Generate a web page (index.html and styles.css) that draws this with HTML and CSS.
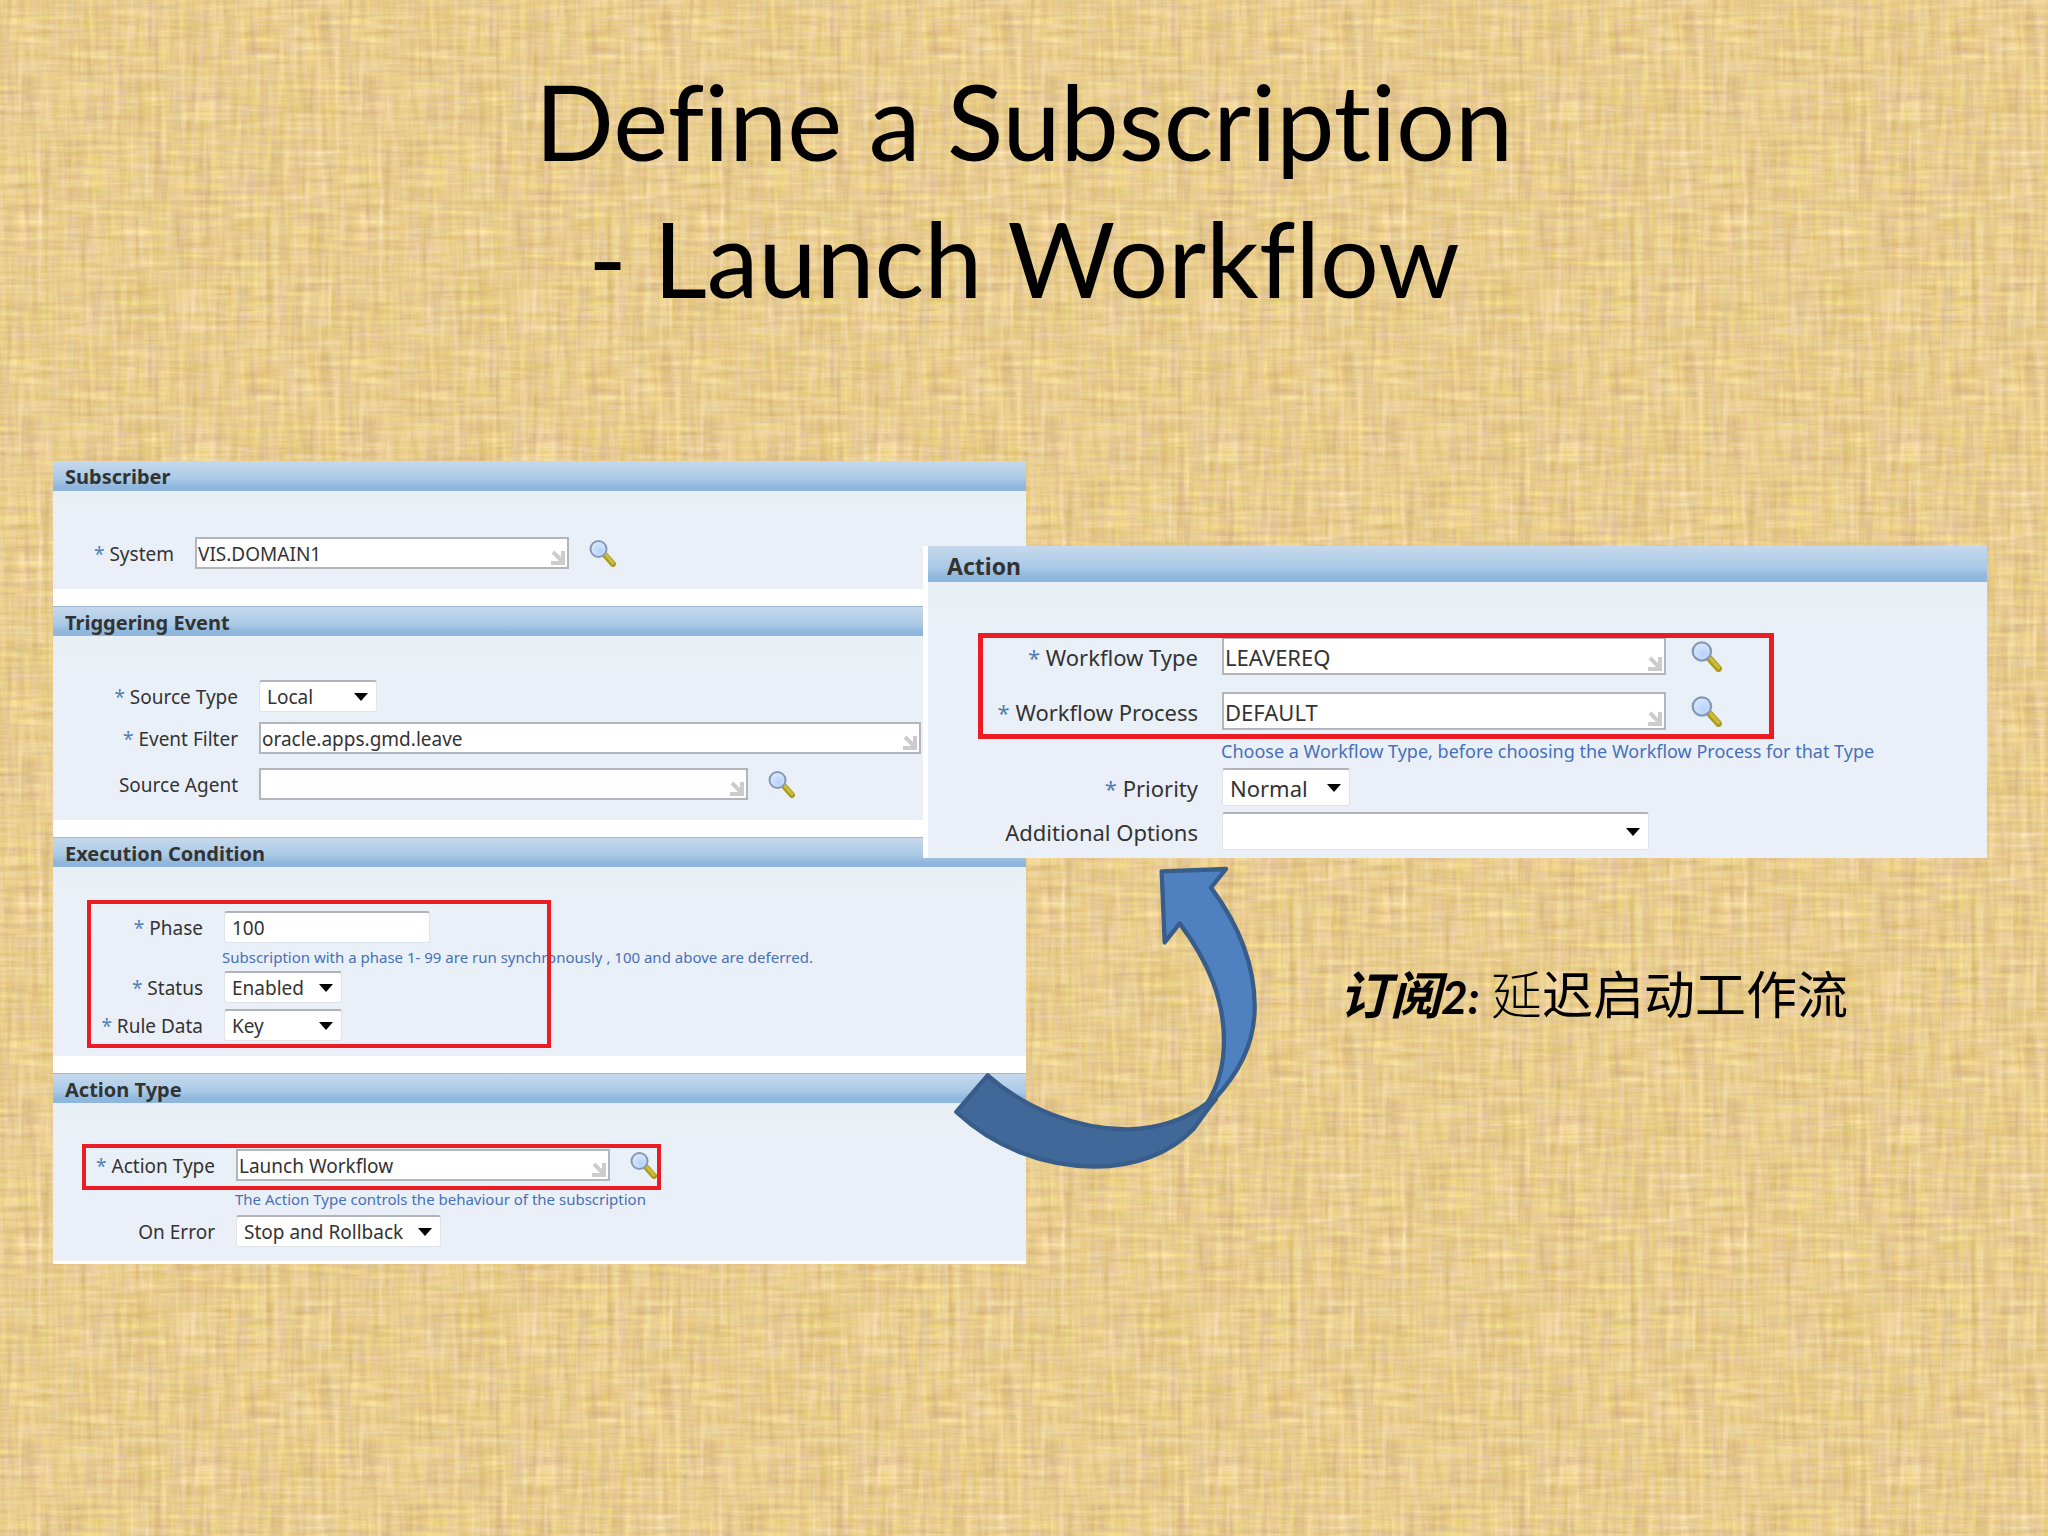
FILE: index.html
```html
<!DOCTYPE html>
<html lang="zh-CN">

<head>
    <meta charset="UTF-8">
    <meta name="viewport" content="width=device-width, initial-scale=1.0">
    <title>Define a Subscription - Launch Workflow</title>
    <link rel="stylesheet" href="styles.css">
</head>

<body>
    <!-- 放大镜图标 -->
    <svg class="defs" width="0" height="0" aria-hidden="true">
        <defs>
            <radialGradient id="glass" cx=".6" cy=".65" r=".7">
                <stop offset="0" stop-color="#b4d2fb" />
                <stop offset="1" stop-color="#dfeafb" />
            </radialGradient>
            <symbol id="search" viewBox="0 0 28 28">
                <path d="M16 16 L24 25" stroke="#a89c1c" stroke-width="6" stroke-linecap="round" />
                <path d="M16 15 L24 24" stroke="#cdbb3a" stroke-width="3" stroke-linecap="round" />
                <circle cx="9.5" cy="10" r="8" fill="url(#glass)" stroke="#8598b8" stroke-width="2" />
            </symbol>
        </defs>
    </svg>

    <main class="slide">
        <h1 class="title">Define a Subscription<br>- Launch Workflow</h1>

        <div class="stage">
            <!-- 左边的订阅表单 -->
            <form class="panel left">
                <section class="block subscriber">
                    <h2>Subscriber</h2>
                    <div class="fields">
                        <div class="row">
                            <label for="system"><i>*</i> System</label>
                            <input type="text" class="grip mid" id="system" value="VIS.DOMAIN1">
                            <button type="button" class="find" aria-label="Search"><svg><use href="#search" /></svg></button>
                        </div>
                    </div>
                </section>

                <section class="block trigger">
                    <h2>Triggering Event</h2>
                    <div class="fields">
                        <div class="row">
                            <label for="stype"><i>*</i> Source Type</label>
                            <select id="stype" class="short"><option>Local</option></select>
                        </div>
                        <div class="row near">
                            <label for="filter"><i>*</i> Event Filter</label>
                            <input type="text" class="grip wide" id="filter" value="oracle.apps.gmd.leave">
                        </div>
                        <div class="row far">
                            <label for="agent">Source Agent</label>
                            <input type="text" class="grip agent" id="agent">
                            <button type="button" class="find" aria-label="Search"><svg><use href="#search" /></svg></button>
                        </div>
                    </div>
                </section>

                <section class="block condition">
                    <h2>Execution Condition</h2>
                    <div class="fields">
                        <div class="row">
                            <label for="phase"><i>*</i> Phase</label>
                            <input type="text" class="plain" id="phase" value="100">
                        </div>
                        <p class="hint">Subscription with a phase 1- 99 are run synchronously , 100 and above are deferred.</p>
                        <div class="row">
                            <label for="status"><i>*</i> Status</label>
                            <select id="status" class="short"><option>Enabled</option></select>
                        </div>
                        <div class="row tight">
                            <label for="rule"><i>*</i> Rule Data</label>
                            <select id="rule" class="short"><option>Key</option></select>
                        </div>
                        <div class="mark"></div>
                    </div>
                </section>

                <section class="block type">
                    <h2>Action Type</h2>
                    <div class="fields">
                        <div class="row">
                            <label for="atype"><i>*</i> Action Type</label>
                            <input type="text" class="grip mid" id="atype" value="Launch Workflow">
                            <button type="button" class="find" aria-label="Search"><svg><use href="#search" /></svg></button>
                        </div>
                        <p class="hint low">The Action Type controls the behaviour of the subscription</p>
                        <div class="row">
                            <label for="onerror">On Error</label>
                            <select id="onerror" class="roll"><option>Stop and Rollback</option></select>
                        </div>
                        <div class="mark"></div>
                    </div>
                </section>
            </form>

            <div class="side">
                <!-- 右边盖在上面的 Action 表单 -->
                <form class="panel right">
                    <section class="block action">
                        <h2>Action</h2>
                        <div class="fields">
                            <div class="row">
                                <label for="wtype"><i>*</i> Workflow Type</label>
                                <input type="text" class="grip flow" id="wtype" value="LEAVEREQ">
                                <button type="button" class="find" aria-label="Search"><svg><use href="#search" /></svg></button>
                            </div>
                            <div class="row far">
                                <label for="wproc"><i>*</i> Workflow Process</label>
                                <input type="text" class="grip flow" id="wproc" value="DEFAULT">
                                <button type="button" class="find" aria-label="Search"><svg><use href="#search" /></svg></button>
                            </div>
                            <p class="hint">Choose a Workflow Type, before choosing the Workflow Process for that Type</p>
                            <div class="row">
                                <label for="prio"><i>*</i> Priority</label>
                                <select id="prio" class="prio"><option>Normal</option></select>
                            </div>
                            <div class="row tight">
                                <label for="opts">Additional Options</label>
                                <select id="opts" class="opts"><option></option></select>
                            </div>
                            <div class="mark"></div>
                        </div>
                    </section>
                </form>

                <p class="caption"><b>订阅<span>2:</span></b> <em>延</em>迟启动工作流</p>

                <!-- 弯箭头 -->
                <svg class="arrow" viewBox="160 45 918 918" aria-hidden="true">
                    <g stroke="#385d8a" stroke-width="13" stroke-linejoin="round">
                        <path fill="#406899" d="M264 676 C375 775 530 838 685 838 C790 836 865 803 922 760 L948 748 C925 775 905 805 882 836 C810 912 700 950 585 950 C430 948 285 893 170 786 Z" />
                        <path fill="#4f81c0" d="M786 64 L979 57 L934 113 C1025 235 1065 350 1065 470 C1065 585 1015 672 940 752 L922 760 C955 710 973 650 973 570 C972 450 930 340 840 220 L795 277 Z" />
                    </g>
                </svg>
            </div>
        </div>
    </main>
</body>

</html>
```

FILE: styles.css
```css
* {
    margin: 0;
    padding: 0;
    box-sizing: border-box;
}

/* 麻布纹理，横竖两层噪点叠在一起 */
body {
    min-height: 100vh;
    background-color: #e7cc8e;
    background-image: url("data:image/svg+xml,%3Csvg xmlns='http://www.w3.org/2000/svg' width='341' height='341'%3E%3Cfilter id='f' x='0' y='0' width='100%25' height='100%25' color-interpolation-filters='sRGB'%3E%3CfeTurbulence type='fractalNoise' baseFrequency='.018 .2' numOctaves='3' seed='21' stitchTiles='stitch' result='h'/%3E%3CfeTurbulence type='fractalNoise' baseFrequency='.16 .015' numOctaves='3' seed='33' stitchTiles='stitch' result='v'/%3E%3CfeComposite in='h' in2='v' operator='arithmetic' k2='.5' k3='.5'/%3E%3CfeColorMatrix values='.24 .1 0 0 .74 .24 .22 0 0 .57 .24 .12 .34 0 .21 0 0 0 0 1'/%3E%3C/filter%3E%3Crect width='341' height='341' filter='url(%23f)'/%3E%3C/svg%3E");
    background-size: 341px 341px;
    font-family: "Noto Sans", "Noto Sans CJK SC", sans-serif;
    font-size: 19px;
    color: #333;
}

.defs {
    position: absolute;
}

.slide {
    padding-top: 52px;
}

.title {
    margin-bottom: 135px;
    font-family: Lato, sans-serif;
    font-size: 104px;
    font-weight: 400;
    font-variant-ligatures: none;
    line-height: 137px;
    text-align: center;
    color: #000;
}

/* 两个面板有一部分重叠 */
.stage {
    display: grid;
    grid-template-columns: 870fr 103fr 961fr;
    align-items: start;
    padding: 0 61px 0 53px;
}

.left {
    grid-column: 1 / 3;
    grid-row: 1;
    padding-bottom: 3px;
}

.side {
    position: relative;
    grid-column: 2 / 4;
    grid-row: 1;
    margin-top: 85px;
}

.panel {
    background-color: #fff;
}

.block h2 {
    height: 30px;
    padding-left: 12px;
    font-size: 20px;
    font-weight: 700;
    line-height: 32px;
    background: linear-gradient(#c6d9ec, #a9c9e6 60%, #8fb6dc 85%);
}

.block + .block {
    margin-top: 17px;
}

.block + .block h2 {
    border-top: 1px solid #9db9d3;
}

.fields {
    position: relative;
    padding: 46px 0 20px;
    background: linear-gradient(#e8f0f6, #ebeff8);
}

.row {
    display: flex;
    align-items: center;
    height: 32px;
}

.tight {
    margin-top: 6px;
}

.near {
    margin-top: 10px;
}

.far {
    margin-top: 14px;
}

.row label {
    margin-right: 21px;
    padding-top: 2px;
    text-align: right;
    white-space: nowrap;
}

.row label i {
    font-style: normal;
    color: #4f7fb5;
}

input,
select {
    height: 32px;
    font-family: inherit;
    font-size: 19px;
    color: #333;
    background-color: #fff;
    border: 2px solid #b2b5bb;
    border-radius: 0;
    outline: none;
}

.grip {
    padding: 1px 24px 0 1px;
    background-image: url("data:image/svg+xml,%3Csvg xmlns='http://www.w3.org/2000/svg' width='16' height='16'%3E%3Cpath d='M3 2 L12 11 M13 1 V13 H1' fill='none' stroke='%23cccccc' stroke-width='4'/%3E%3C/svg%3E");
    background-repeat: no-repeat;
    background-position: right 1px bottom 1px;
}

.plain,
select {
    padding: 0 7px;
    border: 1px solid #dfe3ea;
    border-top: 2px solid #b0b3b9;
    border-radius: 3px;
}

select {
    appearance: none;
    background-image: url("data:image/svg+xml,%3Csvg xmlns='http://www.w3.org/2000/svg' width='14' height='8'%3E%3Cpath d='M0 0 H14 L7 8 Z'/%3E%3C/svg%3E");
    background-repeat: no-repeat;
    background-position: right 8px center;
}

.mid {
    width: 374px;
}

.wide {
    width: 662px;
}

.agent {
    width: 489px;
}

.plain {
    width: 206px;
}

.short {
    width: 118px;
}

.roll {
    width: 205px;
}

.find {
    width: 28px;
    height: 28px;
    margin-left: 20px;
    border: none;
    background: none;
    cursor: pointer;
}

.find svg {
    display: block;
    width: 100%;
    height: 100%;
}

.hint {
    font-size: 15px;
    line-height: 28px;
    white-space: nowrap;
    color: #4670b8;
}

.low {
    padding: 4px 0 2px;
}

/* 红框标注 */
.mark {
    position: absolute;
    border: 4px solid #ec1c24;
}

.subscriber label {
    width: 121px;
}

.trigger label {
    width: 185px;
}

.trigger .fields,
.condition .fields {
    padding-top: 44px;
}

.condition label {
    width: 150px;
}

.condition .fields {
    padding-bottom: 15px;
}

.condition .hint {
    padding-left: 169px;
}

.condition .mark {
    top: 33px;
    left: 34px;
    width: 464px;
    height: 148px;
}

.type label {
    width: 162px;
}

.type .hint {
    padding-left: 182px;
}

.type .fields {
    padding-bottom: 14px;
}

.type .mark {
    top: 41px;
    left: 29px;
    width: 579px;
    height: 46px;
}

/* Action 面板比左边的大一号 */
.right {
    padding-left: 5px;
}

.action h2 {
    height: 36px;
    padding-left: 19px;
    font-size: 23px;
    line-height: 40px;
}

.action .fields {
    padding: 55px 0 8px;
}

.action .row,
.action input,
.action select {
    height: 38px;
    font-size: 22px;
}

.action .far {
    margin-top: 17px;
}

.action label {
    width: 270px;
    margin-right: 24px;
}

.action .hint {
    padding: 7px 0 3px 293px;
    font-size: 18px;
}

.action .find {
    width: 32px;
    height: 32px;
    margin-left: 25px;
}

.flow {
    width: 444px;
}

.prio {
    width: 128px;
}

.opts {
    width: 427px;
}

.action .mark {
    top: 51px;
    left: 50px;
    width: 796px;
    height: 106px;
    border-width: 5px;
}

.caption {
    margin: 104px 0 0 416px;
    font-family: "Noto Sans CJK SC", sans-serif;
    font-size: 51px;
    font-weight: 400;
    line-height: 60px;
    white-space: nowrap;
    color: #000;
}

.caption b {
    font-style: italic;
    font-weight: 700;
}

.caption b span {
    font-family: Lato, sans-serif;
    font-size: 46px;
}

.caption em {
    font-style: normal;
    font-weight: 300;
}

.arrow {
    position: absolute;
    top: 319px;
    left: 30px;
    width: 306px;
    height: 306px;
}
```
